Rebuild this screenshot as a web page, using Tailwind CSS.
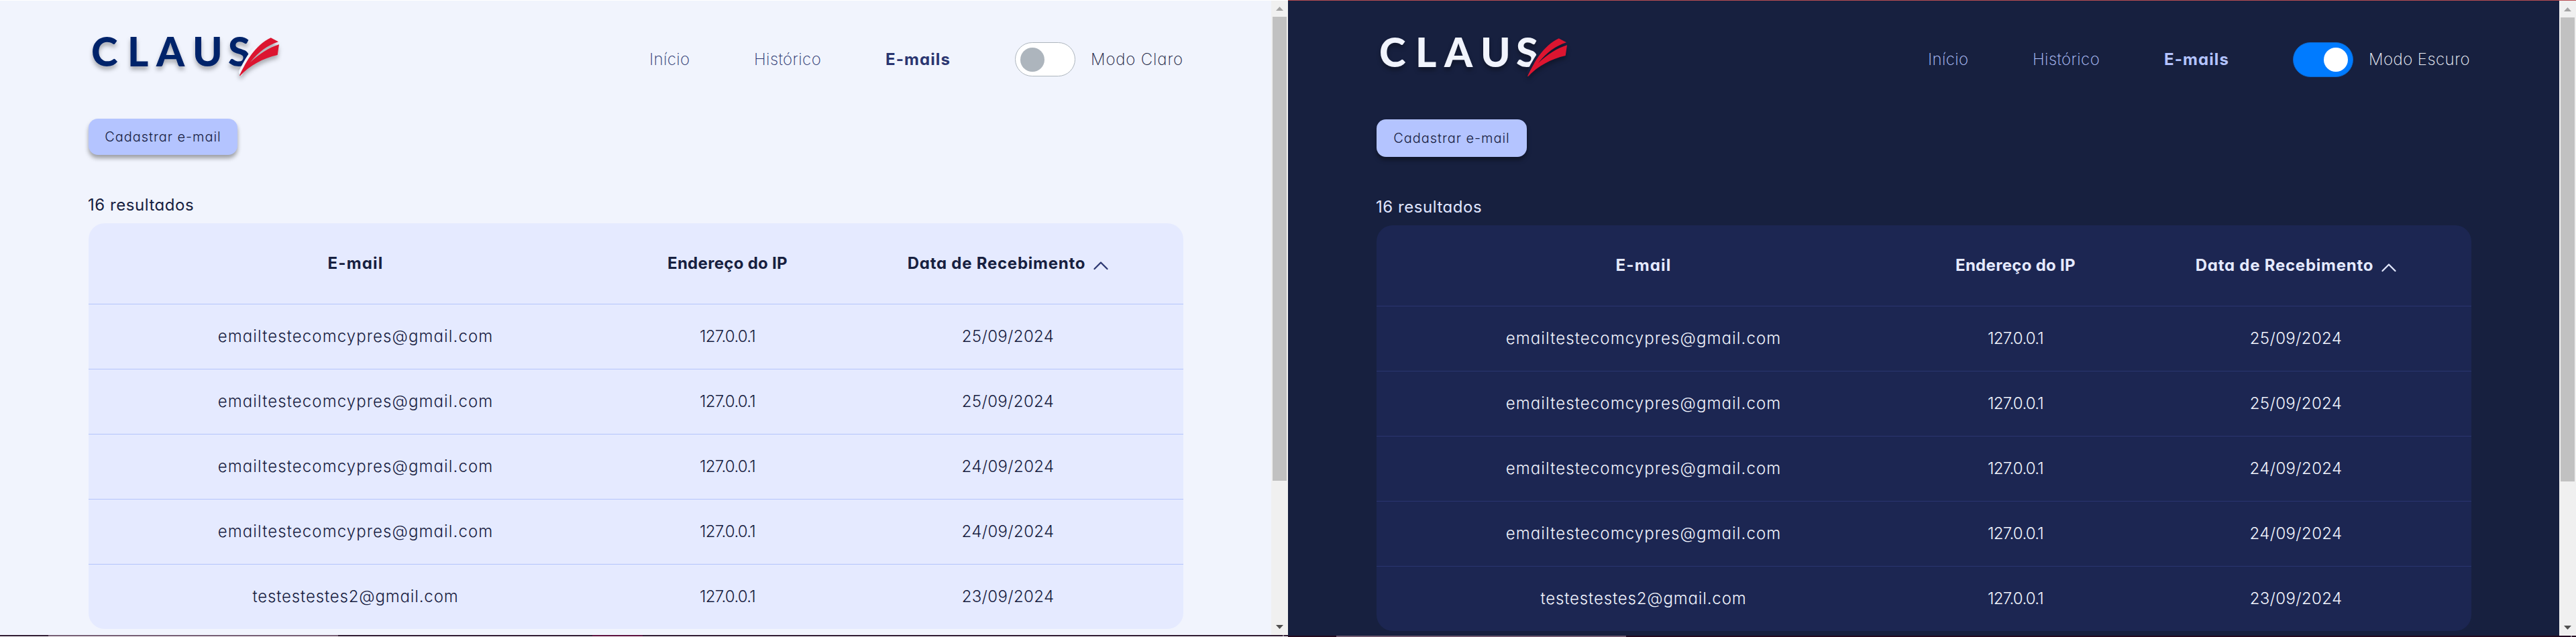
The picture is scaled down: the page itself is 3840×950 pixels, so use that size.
<!DOCTYPE html>
<html lang="pt-BR">
<head>
<meta charset="utf-8">
<title>Claus - E-mails</title>
<script src="https://cdn.jsdelivr.net/npm/@tailwindcss/browser@4"></script>
</head>
<body class="w-[3840px] h-[950px] overflow-hidden flex bg-white font-['Inter',sans-serif] text-2xl leading-8 [font-feature-settings:'cv11'] whitespace-nowrap">

<!-- Light theme -->
<section class="w-[1920px] h-[950px] shrink-0 flex flex-col">
  <div class="h-px bg-white"></div>
  <div class="flex h-[946px] shrink-0">
    <main class="w-[1895px] bg-[#f1f4fd] text-[#17203f] pl-[132px] pr-[131px]">
      <header class="h-[176px] flex items-start justify-between">
        <div class="flex pt-[42px] pl-[4px] text-[#00236a] drop-shadow-[0_5px_3px_rgba(0,0,0,0.3)]">
          <div class="flex font-['Lato',sans-serif] font-black text-[60px] leading-[66px]">
            <span class="w-[54px]">C</span><span class="w-[43px]">L</span><span class="w-[54px]">A</span><span class="w-[53px]">U</span><span class="w-[34px]">S</span>
          </div>
          <svg class="w-[61px] h-[58px] mt-[13px] -ml-[18px] text-[#f1f4fd]" viewBox="0 0 61 58">
            <path fill="currentColor" d="M-1 52C8 34 16 20 25 12L28 15L4 57Z"/>
            <path fill="#dc1530" d="M1 56.500C12 34 24 12 47.700 .3L59 6.300C42 12 30 21 17 37C31 24 45 15 60 10.300L57.700 26C36 31 17 41 2 57Z"/>
          </svg>
        </div>
        <nav class="flex items-center w-[796px] h-[51px] mt-[62px] font-extralight text-[#2a3570]">
          <span class="w-[156px] tracking-[0.4px]">Início</span>
          <span class="w-[196px] tracking-[0.4px]">Histórico</span>
          <b class="w-[193px] font-bold tracking-[1.1px]">E-mails</b>
          <span class="w-[90px] h-[51px] rounded-full border border-[#adb5bd] bg-white flex items-center pl-[7px]"><i class="size-9 rounded-full bg-[#adb5bd]"></i></span>
          <span class="pl-[23px] tracking-[0.85px] text-[#17203f]">Modo Claro</span>
        </nav>
      </header>
      <button class="block w-[222px] h-[54px] rounded-[14px] bg-[#b4c4ff] text-xl font-light tracking-[0.95px] shadow-[0_5px_6px_rgba(0,0,0,0.35)]">Cadastrar e-mail</button>
      <p class="mt-[59px] -ml-px h-8 tracking-[0.55px]">16 resultados</p>
      <table class="mt-[11px] w-[1632px] table-fixed border-collapse rounded-[24px] overflow-hidden bg-[#e5eaff] text-center font-light">
        <thead>
          <tr class="h-[120px] font-bold">
            <th class="w-[796px] tracking-[1.2px]">E-mail</th>
            <th class="w-[313px] tracking-[0.3px]">Endereço do IP</th>
            <th class="w-[523px]"><span class="tracking-[0.75px]">Data de Recebimento</span><svg class="inline ml-3 mt-1 w-[22px] h-[14px]" viewBox="0 0 22 14" fill="none" stroke="#2a3570" stroke-width="2.200" stroke-linecap="round" stroke-linejoin="round"><path d="M1.500 12L11 2.500L20.500 12"/></svg></th>
          </tr>
        </thead>
        <tbody>
          <tr class="h-[97px] border-t border-[#b4c4fb]"><td class="tracking-[1.1px]">emailtestecomcypres@gmail.com</td><td class="tracking-[-0.7px]">127.0.0.1</td><td class="tracking-[0.35px]">25/09/2024</td></tr>
          <tr class="h-[97px] border-t border-[#b4c4fb]"><td class="tracking-[1.1px]">emailtestecomcypres@gmail.com</td><td class="tracking-[-0.7px]">127.0.0.1</td><td class="tracking-[0.35px]">25/09/2024</td></tr>
          <tr class="h-[97px] border-t border-[#b4c4fb]"><td class="tracking-[1.1px]">emailtestecomcypres@gmail.com</td><td class="tracking-[-0.7px]">127.0.0.1</td><td class="tracking-[0.35px]">24/09/2024</td></tr>
          <tr class="h-[97px] border-t border-[#b4c4fb]"><td class="tracking-[1.1px]">emailtestecomcypres@gmail.com</td><td class="tracking-[-0.7px]">127.0.0.1</td><td class="tracking-[0.35px]">24/09/2024</td></tr>
          <tr class="h-[97px] border-t border-[#b4c4fb]"><td class="tracking-[0.85px]">testestestes2@gmail.com</td><td class="tracking-[-0.7px]">127.0.0.1</td><td class="tracking-[0.35px]">23/09/2024</td></tr>
        </tbody>
      </table>
    </main>
    <aside class="w-[25px] bg-[#f0f0f0] flex flex-col items-center">
      <svg class="w-[11px] h-[6px] mt-[9px] shrink-0" viewBox="0 0 11 6"><path fill="#a3a3a3" d="M0 6L5.500 0L11 6Z"/></svg>
      <div class="w-[21px] h-[692px] mt-[9px] bg-[#c1c1c1]"></div>
      <svg class="w-[11px] h-[6px] mt-auto mb-[9px] shrink-0" viewBox="0 0 11 6"><path fill="#505050" d="M0 0L5.500 6L11 0Z"/></svg>
    </aside>
  </div>
  <div class="flex h-[2px] bg-[#2e1930]"><i class="ml-[72px] w-[432px] bg-[#745c72]"></i><i class="ml-[379px] w-[75px] bg-[#5c0f3c]"></i><i class="ml-[954px] w-[2px] bg-[#857585]"></i></div>
</section>

<!-- Dark theme -->
<section class="w-[1920px] h-[950px] shrink-0 flex flex-col">
  <div class="h-px bg-[#b84e52]"></div>
  <div class="flex h-[947px] shrink-0">
    <main class="w-[1895px] bg-[#17203f] text-[#f1f4fd] pl-[132px] pr-[131px]">
      <header class="h-[177px] flex items-start justify-between">
        <div class="flex pt-[43px] pl-[4px] drop-shadow-[0_5px_3px_rgba(0,0,0,0.3)]">
          <div class="flex font-['Lato',sans-serif] font-black text-[60px] leading-[66px]">
            <span class="w-[54px]">C</span><span class="w-[43px]">L</span><span class="w-[54px]">A</span><span class="w-[53px]">U</span><span class="w-[34px]">S</span>
          </div>
          <svg class="w-[61px] h-[58px] mt-[13px] -ml-[18px] text-[#17203f]" viewBox="0 0 61 58">
            <path fill="currentColor" d="M-1 52C8 34 16 20 25 12L28 15L4 57Z"/>
            <path fill="#dc1530" d="M1 56.500C12 34 24 12 47.700 .3L59 6.300C42 12 30 21 17 37C31 24 45 15 60 10.300L57.700 26C36 31 17 41 2 57Z"/>
          </svg>
        </div>
        <nav class="flex items-center w-[810px] h-[52px] mt-[62px] font-extralight text-[#b4c4ff]">
          <span class="w-[156px] tracking-[0.4px]">Início</span>
          <span class="w-[196px] tracking-[0.4px]">Histórico</span>
          <b class="w-[192px] font-bold tracking-[1.1px]">E-mails</b>
          <span class="w-[90px] h-[52px] rounded-full border border-[#0b66cc] bg-[#007bff] flex items-center justify-end pr-[7px]"><i class="size-9 rounded-full bg-white"></i></span>
          <span class="pl-[23px] tracking-[0.45px] text-[#f1f4fd]">Modo Escuro</span>
        </nav>
      </header>
      <button class="block w-[224px] h-[56px] rounded-[14px] bg-[#b4c4ff] text-[#17203f] text-xl font-light tracking-[0.95px] shadow-[0_5px_6px_rgba(0,0,0,0.35)]">Cadastrar e-mail</button>
      <p class="mt-[59px] -ml-px h-8 tracking-[0.55px] text-[#e0e6ff]">16 resultados</p>
      <table class="mt-[11px] w-[1632px] table-fixed border-collapse rounded-[24px] overflow-hidden bg-[#1c2652] text-center font-light">
        <thead>
          <tr class="h-[120px] font-bold text-[#e5eaff]">
            <th class="w-[796px] tracking-[1.2px]">E-mail</th>
            <th class="w-[313px] tracking-[0.3px]">Endereço do IP</th>
            <th class="w-[523px]"><span class="tracking-[0.75px]">Data de Recebimento</span><svg class="inline ml-3 mt-1 w-[22px] h-[14px]" viewBox="0 0 22 14" fill="none" stroke="#e5eaff" stroke-width="2.200" stroke-linecap="round" stroke-linejoin="round"><path d="M1.500 12L11 2.500L20.500 12"/></svg></th>
          </tr>
        </thead>
        <tbody>
          <tr class="h-[97px] border-t border-[#2a3570]"><td class="tracking-[1.1px]">emailtestecomcypres@gmail.com</td><td class="tracking-[-0.7px]">127.0.0.1</td><td class="tracking-[0.35px]">25/09/2024</td></tr>
          <tr class="h-[97px] border-t border-[#2a3570]"><td class="tracking-[1.1px]">emailtestecomcypres@gmail.com</td><td class="tracking-[-0.7px]">127.0.0.1</td><td class="tracking-[0.35px]">25/09/2024</td></tr>
          <tr class="h-[97px] border-t border-[#2a3570]"><td class="tracking-[1.1px]">emailtestecomcypres@gmail.com</td><td class="tracking-[-0.7px]">127.0.0.1</td><td class="tracking-[0.35px]">24/09/2024</td></tr>
          <tr class="h-[97px] border-t border-[#2a3570]"><td class="tracking-[1.1px]">emailtestecomcypres@gmail.com</td><td class="tracking-[-0.7px]">127.0.0.1</td><td class="tracking-[0.35px]">24/09/2024</td></tr>
          <tr class="h-[97px] border-t border-[#2a3570]"><td class="tracking-[0.85px]">testestestes2@gmail.com</td><td class="tracking-[-0.7px]">127.0.0.1</td><td class="tracking-[0.35px]">23/09/2024</td></tr>
        </tbody>
      </table>
    </main>
    <aside class="w-[25px] bg-[#f0f0f0] flex flex-col items-center">
      <svg class="w-[11px] h-[6px] mt-[10px] shrink-0" viewBox="0 0 11 6"><path fill="#a3a3a3" d="M0 6L5.500 0L11 6Z"/></svg>
      <div class="w-[21px] h-[692px] mt-[9px] bg-[#c1c1c1]"></div>
      <svg class="w-[11px] h-[6px] mt-auto mb-[9px] shrink-0" viewBox="0 0 11 6"><path fill="#505050" d="M0 0L5.500 6L11 0Z"/></svg>
    </aside>
  </div>
  <div class="flex h-[2px] bg-[#240a20]"><i class="ml-[72px] w-[432px] bg-[#745c72]"></i><i class="ml-[1408px] w-[2px] bg-[#857585]"></i></div>
</section>
</body>
</html>
